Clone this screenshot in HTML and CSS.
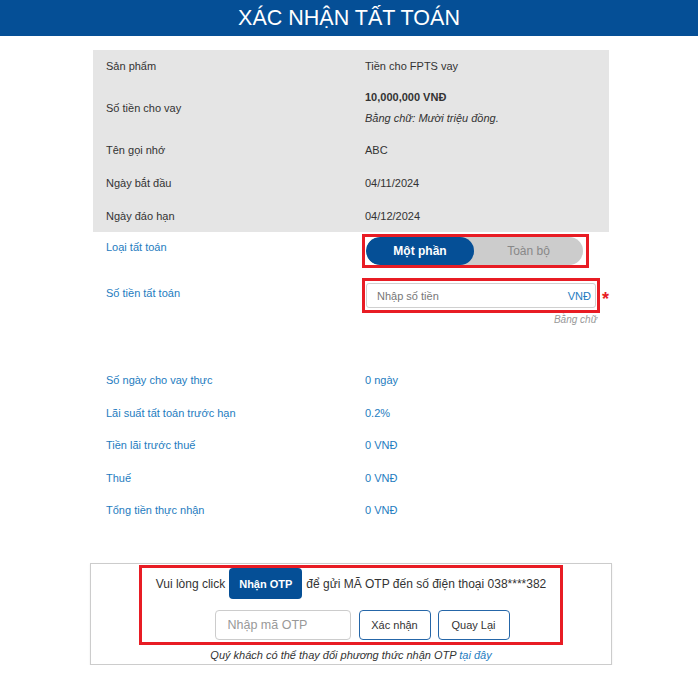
FILE: index.html
```html
<!DOCTYPE html>
<html lang="vi">
<head>
    <meta charset="UTF-8">
    <meta name="viewport" content="width=device-width, initial-scale=1.0">
    <title>Xác nhận tất toán</title>
    <link rel="stylesheet" href="styles.css">
</head>
<body>
    <div class="header">XÁC NHẬN TẤT TOÁN</div>

    <div class="container">
        <div class="summary">
            <div class="row">
                <div class="label">Sản phẩm</div>
                <div class="value">Tiền cho FPTS vay</div>
            </div>
            <div class="row row-tall">
                <div class="label">Số tiền cho vay</div>
                <div class="value">
                    <div class="amount">10,000,000 VNĐ</div>
                    <div class="words">Bằng chữ: Mười triệu đồng.</div>
                </div>
            </div>
            <div class="row">
                <div class="label">Tên gọi nhớ</div>
                <div class="value">ABC</div>
            </div>
            <div class="row row-33">
                <div class="label">Ngày bắt đầu</div>
                <div class="value">04/11/2024</div>
            </div>
            <div class="row row-33">
                <div class="label">Ngày đáo hạn</div>
                <div class="value">04/12/2024</div>
            </div>
        </div>

        <div class="settle">
            <div class="field field-type">
                <div class="field-label">Loại tất toán</div>
                <div class="field-value">
                    <div class="highlight">
                        <div class="toggle">
                            <button type="button" class="toggle-btn active">Một phần</button>
                            <button type="button" class="toggle-btn">Toàn bộ</button>
                        </div>
                    </div>
                </div>
            </div>

            <div class="field field-amount">
                <div class="field-label">Số tiền tất toán</div>
                <div class="field-value">
                    <div class="amount-line">
                        <div class="highlight amount-box">
                            <div class="money-input">
                                <input type="text" id="settleAmount" placeholder="Nhập số tiền">
                                <span class="unit">VNĐ</span>
                            </div>
                        </div>
                        <span class="required">*</span>
                    </div>
                    <div class="hint">Bằng chữ</div>
                </div>
            </div>
        </div>

        <div class="metrics">
            <div class="metric">
                <div class="label">Số ngày cho vay thực</div>
                <div class="value">0 ngày</div>
            </div>
            <div class="metric">
                <div class="label">Lãi suất tất toán trước hạn</div>
                <div class="value">0.2%</div>
            </div>
            <div class="metric">
                <div class="label">Tiền lãi trước thuế</div>
                <div class="value">0 VNĐ</div>
            </div>
            <div class="metric">
                <div class="label">Thuế</div>
                <div class="value">0 VNĐ</div>
            </div>
            <div class="metric">
                <div class="label">Tổng tiền thực nhận</div>
                <div class="value">0 VNĐ</div>
            </div>
        </div>
    </div>

    <div class="otp-panel">
        <div class="otp-box">
            <div class="otp-send">
                <span>Vui lòng click</span>
                <button type="button" class="btn-otp">Nhận OTP</button>
                <span>để gửi MÃ OTP đến số điện thoại 038****382</span>
            </div>
            <div class="otp-actions">
                <input type="text" class="otp-input" placeholder="Nhập mã OTP">
                <button type="button" class="btn-outline">Xác nhận</button>
                <button type="button" class="btn-outline">Quay Lại</button>
            </div>
        </div>
        <p class="otp-note">Quý khách có thể thay đổi phương thức nhận OTP <a href="#">tại đây</a></p>
    </div>
</body>
</html>
```

FILE: styles.css
```css
body {
    font-family: "Liberation Sans", Arial, sans-serif;
    margin: 0;
    padding: 0;
    background-color: #ffffff;
    color: #333333;
}

.header {
    height: 36px;
    line-height: 36px;
    background-color: #054f96;
    color: #ffffff;
    text-align: center;
    font-size: 21.5px;
}

.container {
    width: 516px;
    margin: 14px 0 0 calc(50% - 256px);
}

/* summary table */
.summary {
    background-color: #e5e5e5;
}

.row {
    display: grid;
    grid-template-columns: 259px 1fr;
    align-items: center;
    height: 32px;
    padding-left: 13px;
    font-size: 11px;
    color: #333333;
}

.row-tall {
    height: 52px;
}

.row-33 {
    height: 33px;
}

.amount {
    font-weight: bold;
    line-height: 21px;
}

.words {
    font-style: italic;
    line-height: 21px;
}

/* settle inputs */
.field {
    display: grid;
    grid-template-columns: 259px 1fr;
    padding-left: 13px;
    align-items: start;
}

.field-type {
    margin-top: 2px;
}

.field-amount {
    margin-top: 10px;
}

.field-label {
    font-size: 11px;
    line-height: 14px;
    color: #1e7cc0;
    padding-top: 6px;
}

.field-amount .field-label {
    padding-top: 8px;
}

.field-value {
    margin-left: -3px;
}

.highlight {
    border: 3px solid #e81c24;
    box-sizing: border-box;
}

.field-type .highlight {
    width: 227px;
    height: 34px;
    padding: 0 1px;
    display: flex;
    align-items: center;
}

.toggle {
    display: flex;
    width: 217px;
    height: 28px;
    background-color: #cccccc;
    border-radius: 14px;
    overflow: hidden;
}

.toggle-btn {
    flex: 1;
    border: none;
    background: transparent;
    font-family: inherit;
    font-size: 12px;
    color: #888888;
    padding: 0;
    cursor: pointer;
}

.toggle-btn.active {
    flex: 0 0 108px;
    background-color: #054f96;
    color: #ffffff;
    font-weight: bold;
    border-radius: 14px;
}

.amount-line {
    display: flex;
    align-items: flex-start;
}

.amount-box {
    width: 238px;
    height: 35px;
    padding: 2px 1px;
}

.money-input {
    display: flex;
    align-items: center;
    height: 25px;
    border: 1px solid #d0d0d0;
    border-radius: 3px;
    box-sizing: border-box;
    padding: 0 4px 0 10px;
}

.money-input input {
    flex: 1;
    border: none;
    outline: none;
    font-family: inherit;
    font-size: 11px;
    padding: 0;
    min-width: 0;
    background: transparent;
}

.money-input input::placeholder {
    color: #777777;
}

.unit {
    font-size: 11px;
    color: #1e7cc0;
}

.required {
    color: #e81c24;
    font-size: 18px;
    font-weight: bold;
    line-height: 16px;
    margin: 13px 0 0 2px;
}

.hint {
    width: 235px;
    text-align: right;
    font-size: 10px;
    line-height: 12px;
    font-style: italic;
    color: #999999;
    margin-top: 1px;
}

/* result rows */
.metrics {
    margin-top: 38px;
}

.metric {
    display: grid;
    grid-template-columns: 259px 1fr;
    align-items: center;
    height: 32.5px;
    padding-left: 13px;
    font-size: 11px;
    color: #1e7cc0;
}

/* otp */
.otp-panel {
    width: 522px;
    margin: 36.5px 0 0 calc(50% - 259px);
    border: 1px solid #cccccc;
    box-sizing: border-box;
    height: 102px;
    padding-top: 1px;
    box-shadow: 0 1px 2px rgba(0, 0, 0, 0.08);
}

.otp-box {
    width: 424px;
    margin: 0 auto;
    border: 3px solid #e81c24;
    box-sizing: border-box;
    height: 80px;
}

.otp-send {
    display: flex;
    justify-content: center;
    align-items: center;
    gap: 4px;
    font-size: 12px;
    color: #333333;
    height: 31px;
}

.btn-otp {
    height: 31px;
    width: 73px;
    border: none;
    border-radius: 4px;
    background-color: #054f96;
    color: #ffffff;
    font-family: inherit;
    font-size: 11px;
    font-weight: bold;
    cursor: pointer;
}

.otp-actions {
    display: flex;
    justify-content: center;
    gap: 7px;
    margin-top: 11px;
    padding-left: 22px;
}

.otp-input {
    width: 136px;
    height: 30px;
    box-sizing: border-box;
    border: 1px solid #cccccc;
    border-radius: 4px;
    padding: 0 12px;
    font-family: inherit;
    font-size: 12.5px;
    margin-right: 1px;
}

.otp-input::placeholder {
    color: #999999;
}

.btn-outline {
    width: 72px;
    height: 30px;
    border: 1px solid #2566a8;
    border-radius: 4px;
    background-color: #ffffff;
    color: #333333;
    font-family: inherit;
    font-size: 11px;
    cursor: pointer;
}

.otp-note {
    margin: 4px 0 0;
    text-align: center;
    font-size: 11px;
    font-style: italic;
    color: #333333;
}

.otp-note a {
    color: #1e7cc0;
    text-decoration: none;
}
```
